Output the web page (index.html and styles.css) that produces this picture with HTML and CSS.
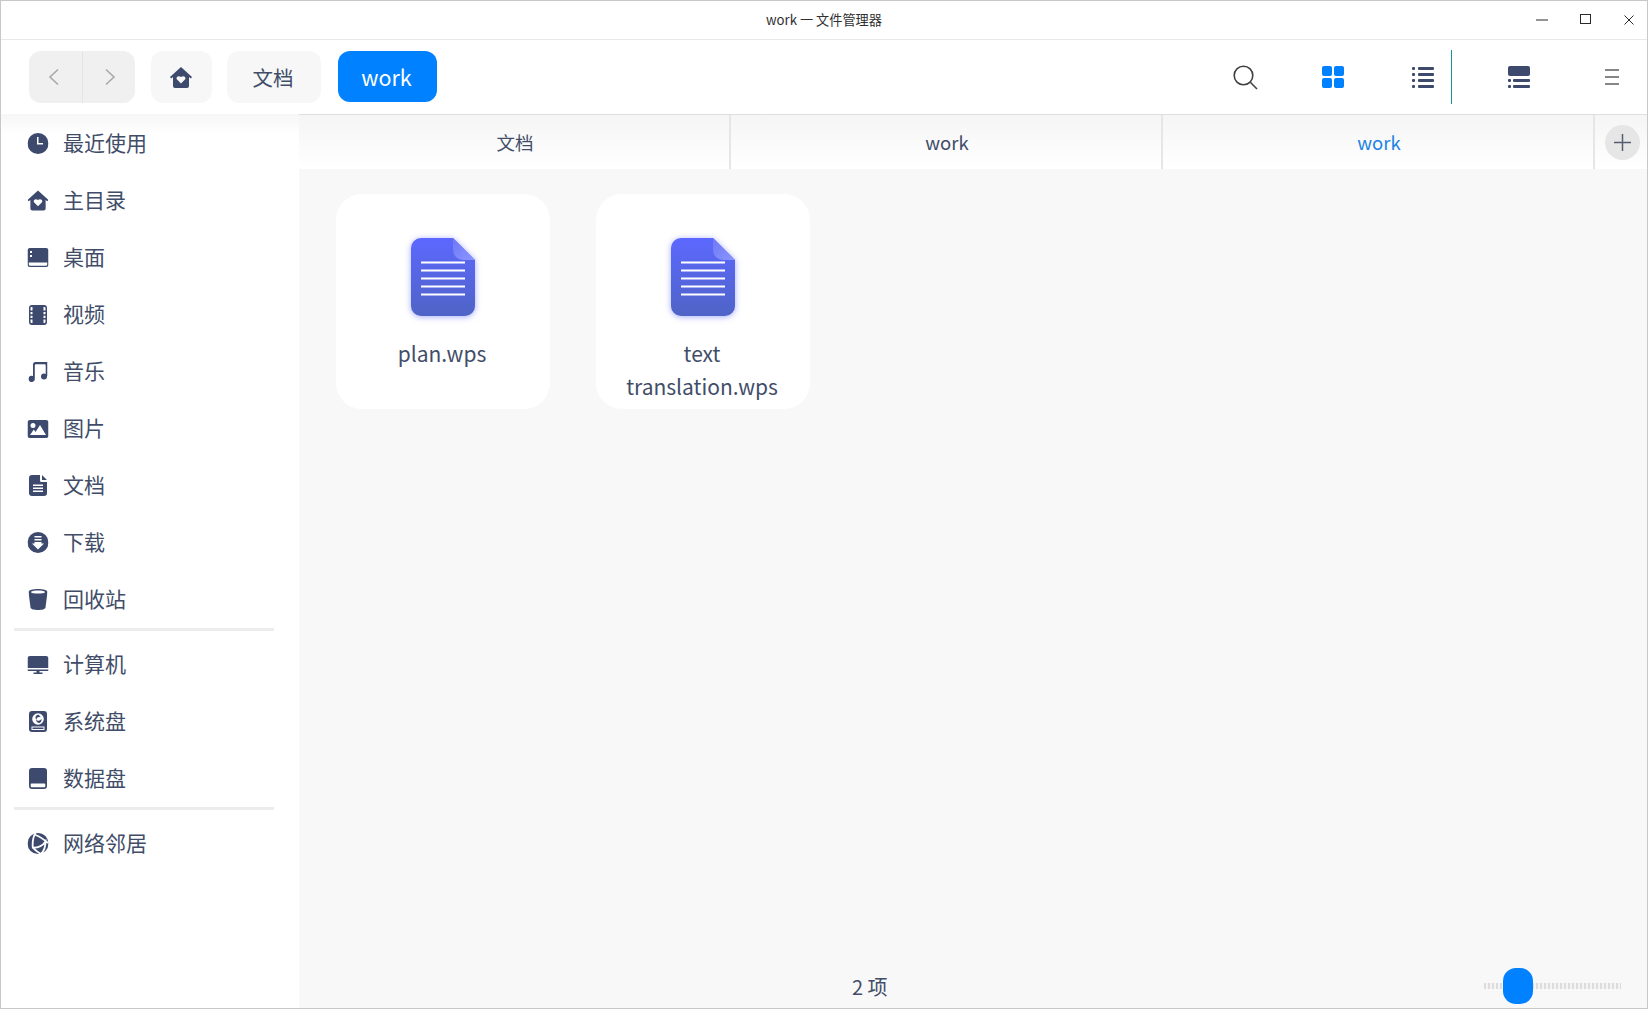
FILE: index.html
```html
<!DOCTYPE html>
<html>
<head>
    <title>work 一 文件管理器</title>
    <meta charset="UTF-8">
    <link rel="stylesheet" href="styles.css">
</head>
<body>
<svg class="defs" width="0" height="0">
    <symbol id="home" viewBox="0 0 22 21">
        <path fill-rule="evenodd" d="M11 0 22 10 20.800 11.400 19 10V19a2 2 0 0 1-2 2H5a2 2 0 0 1-2-2V10L1.200 11.400 0 10ZM11 16.500 6.800 12.300C5.500 10.300 8.500 7.800 11 10 13.500 7.800 16.500 10.300 15.200 12.300Z"/>
    </symbol>
    <linearGradient id="docFill" x1="0" y1="0" x2="0" y2="1">
        <stop offset="0" stop-color="#5c68ff"/>
        <stop offset="1" stop-color="#4f64c6"/>
    </linearGradient>
    <linearGradient id="foldFill" x1="0" y1="0" x2="1" y2="1">
        <stop offset="0" stop-color="#6d78f5"/>
        <stop offset="1" stop-color="#8c96ff"/>
    </linearGradient>
    <symbol id="doc" viewBox="0 0 64 78">
        <path fill="url(#docFill)" d="M10 0H42L64 22V68a10 10 0 0 1-10 10H10A10 10 0 0 1 0 68V10A10 10 0 0 1 10 0Z"/>
        <path fill="url(#foldFill)" d="M42 0 64 22H52A10 10 0 0 1 42 12Z"/>
        <path stroke="#fff" stroke-width="2" d="M10 24.500H54M10 32.500H54M10 40.500H54M10 48.500H54M10 56.500H54"/>
    </symbol>
</svg>

<div class="window">
    <!-- title bar -->
    <div class="titlebar">
        <span class="title">work 一 文件管理器</span>
        <div class="win-btns">
            <svg class="win-min" width="12" height="2" viewBox="0 0 12 2"><path d="M0 1H12"/></svg>
            <svg class="win-max" width="11" height="10" viewBox="0 0 11 10"><rect x=".5" y=".5" width="10" height="9"/></svg>
            <svg class="win-close" width="10" height="10" viewBox="0 0 10 10"><path d="M.5.5 9.500 9.500M9.500.5 .5 9.500"/></svg>
        </div>
    </div>

    <!-- toolbar -->
    <div class="toolbar">
        <div class="nav-group">
            <div class="nav-btn nav-prev">
                <svg width="12" height="18" viewBox="0 0 12 18"><path d="M10 1.500 2 9l8 7.500"/></svg>
            </div>
            <div class="nav-btn nav-next">
                <svg width="12" height="18" viewBox="0 0 12 18"><path d="M2 1.500 10 9l-8 7.500"/></svg>
            </div>
        </div>
        <div class="crumb crumb-home"><svg class="icon-dark" width="22" height="21"><use href="#home"/></svg></div>
        <div class="crumb crumb-doc">文档</div>
        <div class="crumb crumb-active">work</div>

        <div class="tools">
            <svg class="tool-search" width="25" height="25" viewBox="0 0 25 25"><circle cx="10.500" cy="10.500" r="9.300"/><path d="M17.300 17.300 24 24"/></svg>
            <svg class="tool-grid" width="22" height="22" viewBox="0 0 22 22">
                <rect width="10" height="10" rx="2"/><rect x="12" width="10" height="10" rx="2"/>
                <rect y="12" width="10" height="10" rx="2"/><rect x="12" y="12" width="10" height="10" rx="2"/>
            </svg>
            <svg class="tool-list icon-dark" width="22" height="22" viewBox="0 0 22 22">
                <rect y="1" width="3" height="3" rx="1"/><rect x="6" y="1" width="16" height="3" rx="1"/>
                <rect y="7" width="3" height="3" rx="1"/><rect x="6" y="7" width="16" height="3" rx="1"/>
                <rect y="13" width="3" height="3" rx="1"/><rect x="6" y="13" width="16" height="3" rx="1"/>
                <rect y="19" width="3" height="3" rx="1"/><rect x="6" y="19" width="16" height="3" rx="1"/>
            </svg>
            <div class="tool-line"></div>
            <svg class="tool-detail icon-dark" width="22" height="22" viewBox="0 0 22 22">
                <rect width="22" height="10" rx="2"/>
                <rect y="13" width="3" height="3" rx="1"/><rect x="5" y="13" width="17" height="3" rx="1"/>
                <rect y="19" width="3" height="3" rx="1"/><rect x="5" y="19" width="17" height="3" rx="1"/>
            </svg>
            <svg class="tool-menu" width="16" height="16" viewBox="0 0 16 16"><path d="M1 1H15M1 8H15M1 15H15"/></svg>
        </div>
    </div>

    <div class="content">
        <!-- sidebar -->
        <div class="sidebar">
            <div class="side-item">
                <svg class="icon-dark" width="21" height="21" viewBox="0 0 21 21"><path fill-rule="evenodd" d="M10.500 0a10.500 10.500 0 1 1 0 21 10.500 10.500 0 0 1 0-21ZM9.500 4V11.500H15.500V10H11V4Z"/></svg>
                <span>最近使用</span>
            </div>
            <div class="side-item">
                <svg class="icon-dark" width="21" height="21"><use href="#home"/></svg>
                <span>主目录</span>
            </div>
            <div class="side-item">
                <svg class="icon-dark" width="21" height="19" viewBox="0 0 21 19"><path fill-rule="evenodd" d="M2.500 0H18.500A2.500 2.500 0 0 1 21 2.500V16.500A2.500 2.500 0 0 1 18.500 19H2.500A2.500 2.500 0 0 1 0 16.500V2.500A2.500 2.500 0 0 1 2.500 0ZM1.300 14.500V16.500A1.200 1.200 0 0 0 2.500 17.700H18.500A1.200 1.200 0 0 0 19.700 16.500V14.500ZM2.500 3V5H4.500V3ZM2.500 7V9H4.500V7Z"/></svg>
                <span>桌面</span>
            </div>
            <div class="side-item">
                <svg class="icon-dark" width="18" height="20" viewBox="0 0 18 20"><path fill-rule="evenodd" d="M3 0H15A3 3 0 0 1 18 3V17A3 3 0 0 1 15 20H3A3 3 0 0 1 0 17V3A3 3 0 0 1 3 0ZM1.500 3V5.500H3.500V2H2.500A1 1 0 0 0 1.500 3ZM1.500 7V9.300H3.500V7ZM1.500 10.800V13H3.500V10.800ZM1.500 14.500V17A1 1 0 0 0 2.500 18H3.500V14.500ZM14.500 2V5.500H16.500V3A1 1 0 0 0 15.500 2ZM14.500 7V9.300H16.500V7ZM14.500 10.800V13H16.500V10.800ZM14.500 14.500V18H15.500A1 1 0 0 0 16.500 17V14.500Z"/></svg>
                <span>视频</span>
            </div>
            <div class="side-item">
                <svg class="icon-dark" width="19" height="21" viewBox="0 0 19 21"><path d="M4.500 17V3.500C4.500 2 5.500 1 7 1H19V15H17.200V4.500C17.200 3.700 16.800 3.200 16 3.200H7.500C6.700 3.200 6.300 3.700 6.300 4.500V17.500A3.200 3.200 0 1 1 4.500 15Z"/><circle cx="15.500" cy="15.500" r="3"/></svg>
                <span>音乐</span>
            </div>
            <div class="side-item">
                <svg class="icon-dark" width="21" height="18" viewBox="0 0 21 18"><path fill-rule="evenodd" d="M2.500 0H18.500A2.500 2.500 0 0 1 21 2.500V15.500A2.500 2.500 0 0 1 18.500 18H2.500A2.500 2.500 0 0 1 0 15.500V2.500A2.500 2.500 0 0 1 2.500 0ZM5.500 3A2.500 2.500 0 1 0 5.500 8 2.500 2.500 0 0 0 5.500 3ZM12.500 5 8 12 6.300 9.500 2.500 15H18.500Z"/></svg>
                <span>图片</span>
            </div>
            <div class="side-item">
                <svg class="icon-dark" width="18" height="21" viewBox="0 0 18 21"><path fill-rule="evenodd" d="M3 0H11V5.500A1.500 1.500 0 0 0 12.500 7H18V18A3 3 0 0 1 15 21H3A3 3 0 0 1 0 18V3A3 3 0 0 1 3 0ZM13 0 18 5H13ZM4 9.500V11H14V9.500ZM4 12.500V14H14V12.500ZM4 15.500V17H14V15.500Z"/></svg>
                <span>文档</span>
            </div>
            <div class="side-item">
                <svg class="icon-dark" width="21" height="21" viewBox="0 0 21 21"><path fill-rule="evenodd" d="M10.500 0a10.500 10.500 0 1 1 0 21 10.500 10.500 0 0 1 0-21ZM7 4V5.500H14V4ZM7 7V8.500H14V7ZM7 10V11.500H4.500L10.500 17.500 16.500 11.500H14V10Z"/></svg>
                <span>下载</span>
            </div>
            <div class="side-item">
                <svg class="icon-dark" width="19" height="21" viewBox="0 0 19 21"><path fill-rule="evenodd" d="M9.500 0C14.700 0 19 1.200 19 3L17 18.500C16.800 20.200 13.500 21 9.500 21S2.200 20.200 2 18.500L0 3C0 1.200 4.300 0 9.500 0ZM9.500 1.400C5.500 1.400 2.500 2.100 2.500 3S5.500 4.600 9.500 4.600 16.500 3.900 16.500 3 13.500 1.400 9.500 1.400Z"/></svg>
                <span>回收站</span>
            </div>
            <div class="side-divider"></div>
            <div class="side-item">
                <svg class="icon-dark" width="21" height="18" viewBox="0 0 21 18"><path d="M2.500 0H18.500A2.500 2.500 0 0 1 21 2.500V12H0V2.500A2.500 2.500 0 0 1 2.500 0ZM0 13.500H21V15H12V16.500H15V18H6V16.500H9V15H0Z"/></svg>
                <span>计算机</span>
            </div>
            <div class="side-item">
                <svg class="icon-dark" width="18" height="21" viewBox="0 0 18 21"><path fill-rule="evenodd" d="M3 0H15A3 3 0 0 1 18 3V18A3 3 0 0 1 15 21H3A3 3 0 0 1 0 18V3A3 3 0 0 1 3 0ZM9 2.200A5.800 5.800 0 1 0 9 13.800 5.800 5.800 0 0 0 9 2.200ZM2.500 15.500V19H15.500V15.500ZM3.500 16.500H14.500V18H3.500ZM9 3.800C6.300 4.300 5.500 7.500 8 9 6.800 7.200 9 5.300 11.800 6.500 11.200 5 10.200 4.100 9 3.800ZM12.400 7.500C12 9.500 9.500 10.500 6.800 9 7.500 11 9.200 12.300 10.500 12 12.300 11.300 13 9.200 12.400 7.500Z"/></svg>
                <span>系统盘</span>
            </div>
            <div class="side-item">
                <svg class="icon-dark" width="18" height="21" viewBox="0 0 18 21"><path fill-rule="evenodd" d="M3 0H15A3 3 0 0 1 18 3V18A3 3 0 0 1 15 21H3A3 3 0 0 1 0 18V3A3 3 0 0 1 3 0ZM2.500 15.500A.8.800 0 0 0 1.700 16.300V18.200A1 1 0 0 0 2.700 19.200H15.300A1 1 0 0 0 16.300 18.200V16.300A.8.800 0 0 0 15.500 15.500Z"/></svg>
                <span>数据盘</span>
            </div>
            <div class="side-divider"></div>
            <div class="side-item">
                <svg class="icon-dark icon-net" width="21" height="21" viewBox="0 0 21 21">
                    <circle cx="10.500" cy="10.500" r="10.500"/>
                    <path d="M8 0C5.500 4 4.800 9 5.300 14.700 8 17.500 10.500 19.500 13.500 21M8 2C12 3.500 16.500 6.500 20.500 10M5.300 14.700C10 14.800 14.500 14 18 8.500 18 14 16 18.500 13.500 21"/>
                </svg>
                <span>网络邻居</span>
            </div>
        </div>

        <!-- main area -->
        <div class="main">
            <div class="tabs">
                <div class="tab">文档</div>
                <div class="tab">work</div>
                <div class="tab tab-active">work</div>
                <div class="tab-add">
                    <div class="add-btn">
                        <svg width="17" height="17" viewBox="0 0 17 17"><path d="M8.500 0V17M0 8.500H17"/></svg>
                    </div>
                </div>
            </div>

            <div class="files">
                <div class="file-card">
                    <svg class="doc-icon" width="64" height="78"><use href="#doc"/></svg>
                    <div class="file-name">plan.wps</div>
                </div>
                <div class="file-card">
                    <svg class="doc-icon" width="64" height="78"><use href="#doc"/></svg>
                    <div class="file-name">text<br>translation.wps</div>
                </div>
            </div>

            <div class="statusbar">
                <span class="count">2 项</span>
                <div class="slider">
                    <div class="slider-thumb"></div>
                </div>
            </div>
        </div>
    </div>
</div>
</body>
</html>
```

FILE: styles.css
```css
html, body {
    height: 100%;
}
body {
    margin: 0;
    font-family: "Noto Sans CJK SC", "Noto Sans", sans-serif;
    color: #414d68;
    background-color: #fff;
    overflow: hidden;
}
.defs {
    position: absolute;
}
.icon-dark {
    fill: #3d4a6e;
    flex: none;
}
.window {
    height: 100vh;
    box-sizing: border-box;
    display: flex;
    flex-direction: column;
    border: 1px solid #c8c8c8;
}

/* title bar */
.titlebar {
    height: 38px;
    flex: none;
    display: flex;
    align-items: center;
    justify-content: center;
    position: relative;
    border-bottom: 1px solid #e8e8e8;
}
.title {
    font-size: 13.200px;
    color: #303030;
    margin-top: -2px;
}
.win-btns {
    position: absolute;
    right: 13px;
    top: 0;
    height: 38px;
    display: flex;
    align-items: center;
}
.win-btns svg {
    fill: none;
    stroke: #2a2a2a;
    stroke-width: 1;
}
.win-min {
    margin-right: 32px;
}
.win-max {
    margin-right: 33px;
    margin-top: -2px;
}
.win-close {
    margin-top: -1px;
}

/* toolbar */
.toolbar {
    height: 74px;
    flex: none;
    box-sizing: border-box;
    padding: 11px 27px 0 28px;
    display: flex;
    align-items: flex-start;
    background-color: #fff;
}
.nav-group {
    display: flex;
    width: 106px;
    height: 52px;
    background-color: #f0f0f0;
    border-radius: 12px;
    margin-right: 16px;
}
.nav-btn {
    flex: 1;
    display: flex;
    align-items: center;
    justify-content: center;
}
.nav-btn svg {
    fill: none;
    stroke: #a8a8a8;
    stroke-width: 1.6;
}
.nav-prev {
    padding-right: 2px;
}
.nav-next {
    padding-left: 2px;
    border-left: 1px solid #e4e4e4;
}
.crumb {
    height: 52px;
    display: flex;
    align-items: center;
    justify-content: center;
    box-sizing: border-box;
    padding-right: 2px;
    background-color: #f7f7f7;
    border-radius: 12px;
    font-size: 20.500px;
}
.crumb-home {
    width: 61px;
    margin-right: 15px;
}
.crumb-doc {
    width: 94px;
    margin-right: 17px;
}
.crumb-active {
    width: 99px;
    height: 51px;
    background-color: #0081ff;
    color: #fff;
    font-size: 21.500px;
}
.tools {
    margin-left: auto;
    height: 54px;
    margin-top: -1px;
    display: flex;
    align-items: center;
}
.tools svg {
    flex: none;
}
.tool-search {
    fill: none;
    stroke: #414141;
    stroke-width: 1.6;
}
.tool-grid {
    fill: #0081ff;
    margin-left: 64px;
}
.tool-list {
    margin-left: 68px;
}
.tool-line {
    width: 1px;
    height: 54px;
    background-color: #1b8a9c;
    margin-left: 17px;
}
.tool-detail {
    margin-left: 56px;
}
.tool-menu {
    fill: none;
    stroke: #5f5f5f;
    stroke-width: 1.5;
    margin-left: 74px;
}

.content {
    flex: 1;
    min-height: 0;
    display: flex;
}

/* sidebar */
.sidebar {
    width: 298px;
    flex: none;
    background: linear-gradient(#f6f6f6, #fff 20px);
}
.side-item {
    height: 57px;
    display: flex;
    align-items: center;
    font-size: 21px;
    position: relative;
}
.side-item svg {
    position: absolute;
    left: 37px;
    transform: translate(-50%, 1px);
}
.side-item span {
    margin: -2px 0 0 62px;
}
.side-divider {
    height: 3px;
    width: 260px;
    margin: 1px 0 4px 13px;
    background-color: #ececec;
}
.icon-net path {
    fill: none;
    stroke: #fff;
    stroke-width: 1.800;
}

/* tabs and files */
.main {
    flex: 1;
    min-width: 0;
    display: flex;
    flex-direction: column;
    background-color: #f8f8f8;
}
.tabs {
    height: 55px;
    flex: none;
    display: flex;
    box-sizing: border-box;
    border-top: 1px solid #dfdfdf;
    background: linear-gradient(#f5f5f5, #fff);
}
.tab {
    width: 432px;
    display: flex;
    align-items: center;
    justify-content: center;
    padding: 0 0 1px 2px;
    font-size: 18.500px;
    border-right: 2px solid #e6e6e6;
    box-sizing: border-box;
}
.tab-active {
    color: #2283e6;
}
.tab-add {
    flex: 1;
    display: flex;
    align-items: center;
    justify-content: center;
    padding-left: 2px;
}
.add-btn {
    width: 35px;
    height: 35px;
    border-radius: 50%;
    background-color: #e6e6e6;
    display: flex;
    align-items: center;
    justify-content: center;
}
.add-btn svg {
    fill: none;
    stroke: #555e70;
    stroke-width: 1.5;
}
.files {
    flex: 1;
    min-height: 0;
    display: flex;
    align-items: flex-start;
    gap: 46px;
    padding: 25px 0 0 37px;
}
.file-card {
    width: 214px;
    height: 215px;
    background-color: #fff;
    border-radius: 26px;
    display: flex;
    flex-direction: column;
    align-items: center;
}
.doc-icon {
    margin-top: 44px;
    flex: none;
    filter: drop-shadow(0 1px 3px rgba(90, 100, 255, 0.55));
}
.file-name {
    margin-top: 21px;
    padding-right: 2px;
    font-size: 21px;
    line-height: 33px;
    text-align: center;
}
.statusbar {
    height: 56px;
    flex: none;
    box-sizing: border-box;
    padding-top: 12px;
    position: relative;
    display: flex;
    align-items: center;
}
.count {
    margin-left: 553px;
    font-size: 20px;
}
.slider {
    position: absolute;
    left: 1185px;
    top: 31px;
    width: 137px;
    height: 6px;
    background: repeating-linear-gradient(90deg, #dcdcdc 0, #dcdcdc 2px, #f4f4f4 2px, #f4f4f4 4px);
}
.slider-thumb {
    position: absolute;
    left: 19px;
    top: -15px;
    width: 30px;
    height: 36px;
    border-radius: 13px;
    background-color: #0081ff;
}
```
